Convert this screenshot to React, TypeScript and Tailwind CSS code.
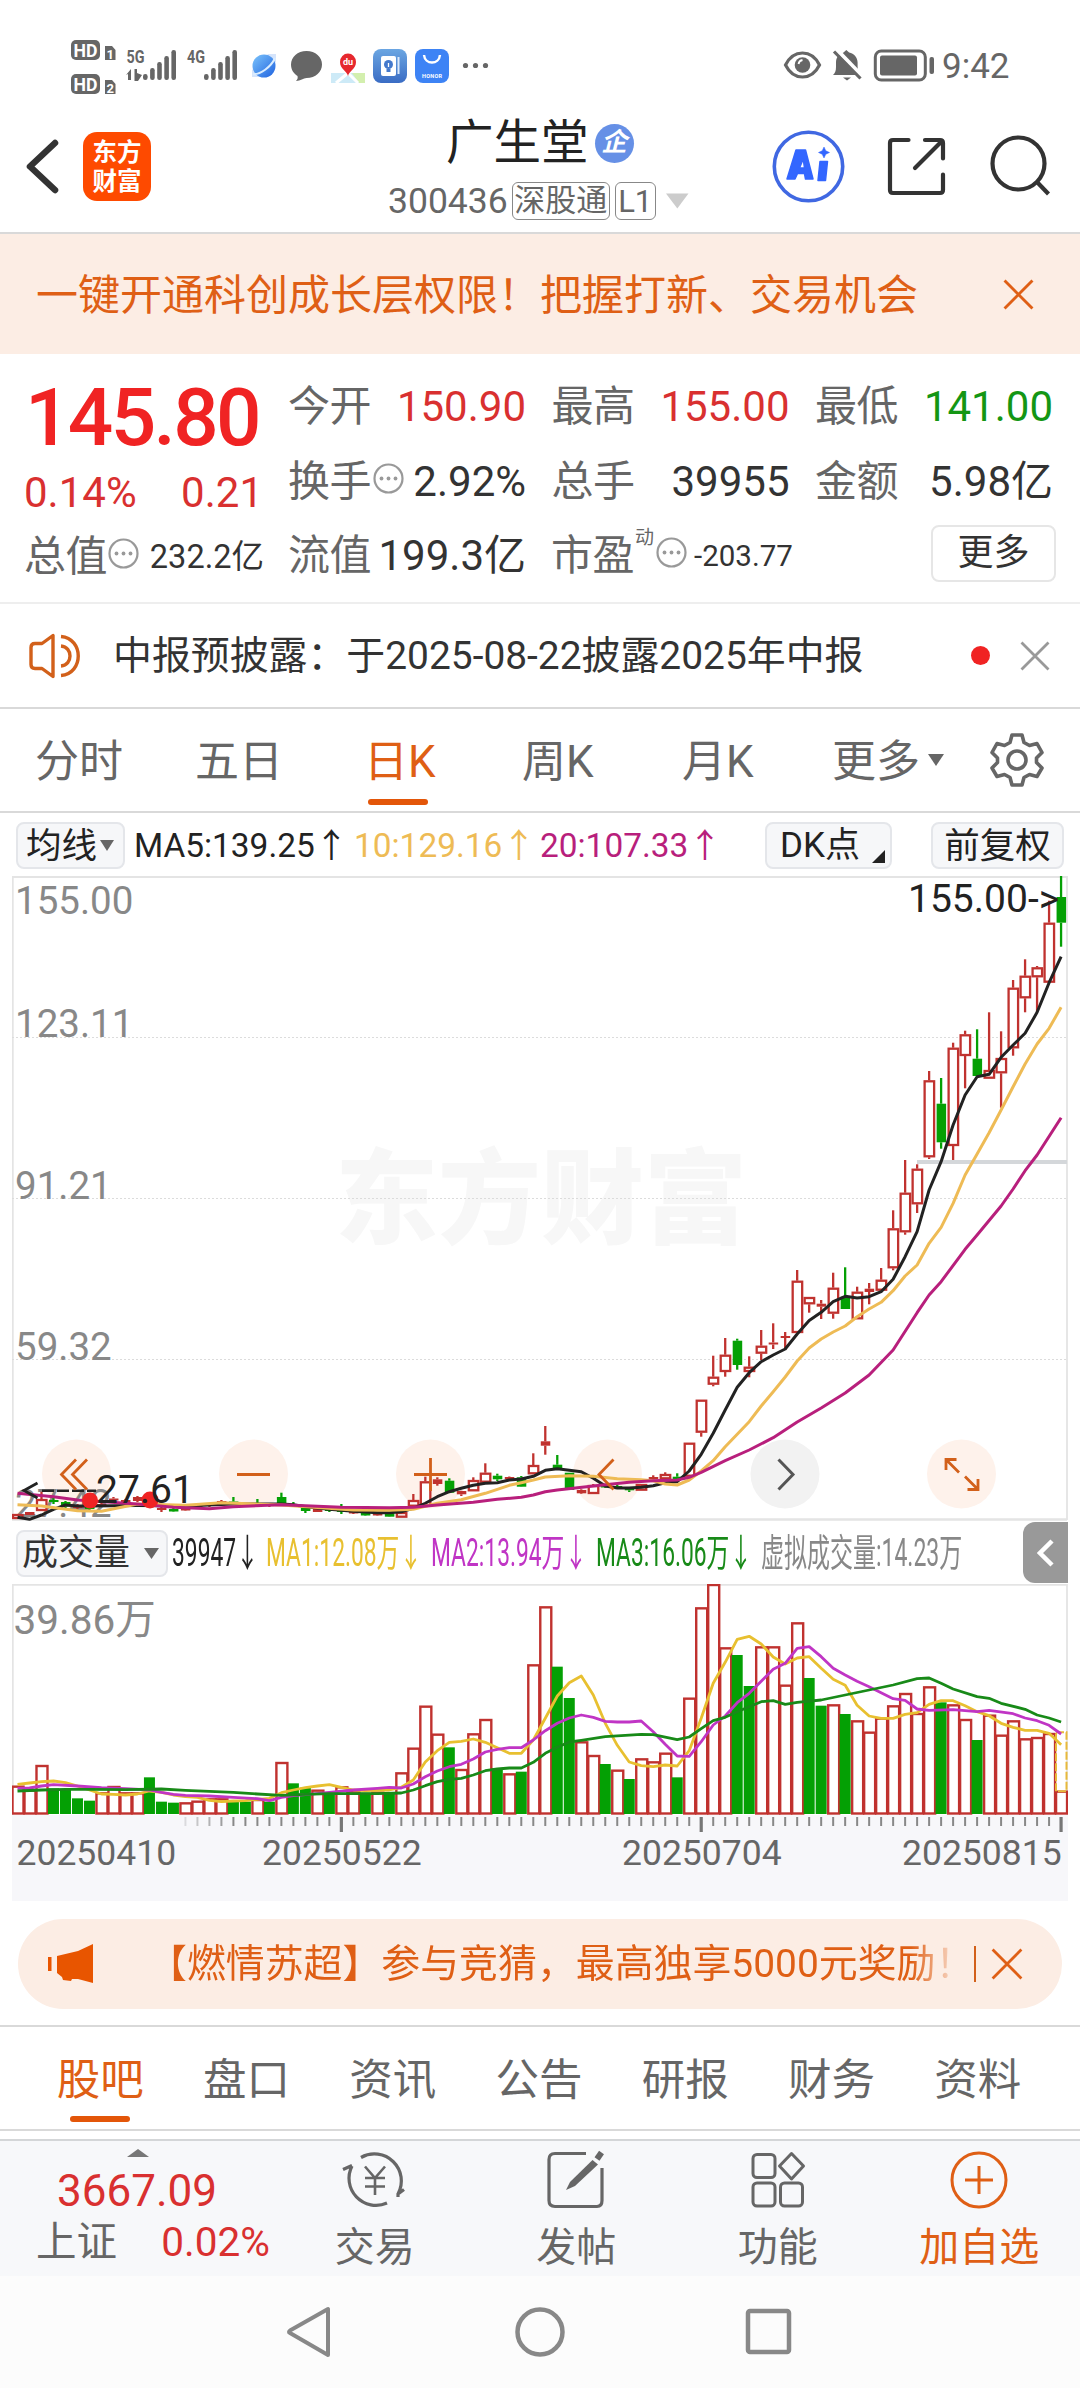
import React from "react";

const PITCH = 11.995;
const cx = (i: number) => 5.5 + i * PITCH;

type Candle = [number, "r" | "g", number, number, number, number];

/* index, colour, high, body top, body bottom, low */
const candles: Candle[] = [
  [0, "r", 638, 638, 643, 643], [1, "r", 636, 636, 639, 639], [2, "r", 615.7, 623, 635, 635],
  [3, "g", 622, 624, 626, 628], [4, "g", 625, 626, 630.5, 632], [5, "r", 628, 630, 632, 633], [6, "g", 630, 631, 633, 634],
  [7, "r", 627, 628, 630, 631], [8, "r", 621, 622.5, 624.5, 626], [9, "r", 623, 624, 626, 627], [10, "r", 620, 621, 625, 626],
  [11, "r", 622, 623, 629, 630], [12, "r", 630, 632, 634, 636], [13, "g", 631, 633, 635.5, 636], [14, "r", 630, 631, 634.5, 635],
  [15, "r", 629, 630, 632, 633], [16, "r", 627, 628, 630, 631], [17, "r", 624, 625, 627, 628], [18, "g", 621, 625.5, 627, 628],
  [19, "g", 627, 628, 629, 630], [20, "g", 623, 627, 629, 630], [21, "r", 627, 628, 630, 631], [22, "g", 616.7, 621, 627, 628],
  [23, "g", 626, 628, 631, 631], [24, "g", 631, 632, 635, 637], [25, "r", 631, 633, 636, 636], [26, "g", 631, 633, 635, 636],
  [27, "g", 628, 633, 636, 638], [28, "r", 635, 636, 637, 638], [29, "g", 636, 637, 639.5, 640], [30, "r", 636, 637, 639.5, 640],
  [31, "g", 637, 637.3, 640.7, 641], [32, "r", 636, 636, 641.7, 641.7], [33, "r", 618, 624, 630.7, 630.7],
  [34, "r", 600.7, 605.3, 630, 630], [35, "r", 601.3, 603.3, 608, 609.7], [36, "g", 602.3, 604.7, 616.7, 616.7],
  [37, "r", 614.7, 615, 618.3, 620], [38, "r", 601.3, 604, 615.3, 615.3], [39, "r", 587.3, 596.7, 606.7, 606.7],
  [40, "g", 597.7, 599.7, 603.3, 605], [41, "r", 600.5, 601, 603.3, 603.3], [42, "g", 600, 601.3, 610.7, 611],
  [43, "r", 577.3, 589, 598.3, 598.3], [44, "r", 550, 565.3, 569.7, 578.7], [45, "g", 579, 588.7, 592.3, 592.3],
  [46, "g", 596.7, 596.7, 614, 614], [47, "r", 613.3, 614, 617.3, 618], [48, "r", 608, 609, 618, 618], [49, "g", 609, 610, 611.3, 612],
  [50, "g", 609, 610, 611.3, 613], [51, "g", 611, 612.3, 614.3, 616], [52, "r", 608, 608, 614.7, 614.7], [53, "r", 599.3, 601, 603.3, 604],
  [54, "r", 596.3, 598, 603.3, 603.3], [55, "g", 597.3, 600.7, 604, 604], [56, "r", 566.7, 566.7, 600.7, 600.7],
  [57, "r", 523.7, 523.7, 556.7, 560.7], [58, "r", 479.7, 500.7, 508.7, 510.3], [59, "r", 462, 478.7, 496, 500.7],
  [60, "g", 462.7, 464.7, 489, 493.7], [61, "r", 480.3, 490.7, 496, 501.3], [62, "r", 454, 469.7, 477.7, 484],
  [63, "r", 447.3, 466.5, 468.5, 473], [64, "r", 456, 460, 462, 474], [65, "r", 394, 404.7, 457, 457], [66, "r", 421, 421, 428.3, 436.7],
  [67, "r", 424, 427.7, 430.7, 443], [68, "r", 396.7, 411.7, 437.7, 442.7], [69, "g", 391.3, 420.7, 433, 433],
  [70, "r", 410.7, 415.7, 443.3, 443.3], [71, "r", 407, 412.7, 416, 428.3], [72, "r", 392, 403.7, 414.7, 414.7],
  [73, "r", 334.3, 352.3, 392.3, 394.3], [74, "r", 284, 316.7, 356.3, 358.7], [75, "r", 288.3, 292.7, 328.3, 337],
  [76, "r", 195, 204.3, 281.3, 283], [77, "g", 202, 227.7, 266.3, 272.7], [78, "r", 166.7, 171.7, 270, 284],
  [79, "r", 154.7, 158.3, 180, 212.3], [80, "g", 153.3, 182.7, 200, 200], [81, "r", 136.3, 194, 202.7, 202.7],
  [82, "r", 155.3, 182, 197.3, 231.7], [83, "r", 104, 111.7, 172.3, 179.7], [84, "r", 83.3, 99.7, 122.3, 136.3],
  [85, "r", 90, 91.3, 101.3, 135.7], [86, "r", 24.7, 46.7, 106.7, 106.7], [87, "g", 0, 21, 46.7, 70.7],
];

type Pt = [number, number];

const ma5: Pt[] = [
  [0, 641.3], [1, 643.3], [2, 639], [3, 633.3], [4, 629], [5, 630], [6, 630], [10, 629.5], [14, 630], [18, 628], [22, 628], [23, 628.7], [24, 630.7],
  [26, 633.3], [28, 635.3], [30, 636.7], [31, 636.7], [32, 635.7], [33, 632.3], [34, 627.3], [35, 620.7], [36, 615.7], [37, 612.3],
  [38, 609.3], [39, 607.3], [40, 606.7], [41, 604], [42, 603], [43, 600.3], [44, 594.3], [45, 592.7], [46, 594.3], [47, 595.7],
  [48, 602.3], [49, 610], [50, 612], [51, 612], [52, 611.3], [53, 609.7], [54, 606.7], [55, 605.7], [56, 595], [57, 578.3],
  [58, 557.3], [59, 534], [60, 511.3], [61, 496.7], [62, 485.7], [63, 479], [64, 473], [65, 458], [66, 444.5], [67, 436.3],
  [68, 425.7], [69, 420.3], [70, 422], [71, 420.7], [72, 415.7], [73, 403.3], [74, 380.7], [75, 355.7], [76, 314], [77, 285.7],
  [78, 249], [79, 219], [80, 200.7], [81, 198.3], [82, 181.3], [83, 169], [84, 157.3], [85, 136.3], [86, 106.7], [87, 80.7],
];
const ma10: Pt[] = [
  [0, 628.7], [2, 630], [5, 634.7], [7, 635.3], [10, 628], [14, 629.3], [17, 626.7], [22, 629], [28, 634], [31, 634.3], [33, 633.3],
  [35, 627.3], [37, 623.7], [39, 617.3], [41, 609.3], [42, 606.7], [43, 604], [44, 601], [46, 599.7], [48, 600.3], [50, 602.7],
  [52, 603.7], [53, 604.7], [54, 608], [55, 609], [56, 604], [57, 595], [58, 584.7], [59, 570.7], [60, 558.3], [61, 545.7],
  [62, 530], [63, 515.7], [64, 501], [65, 485], [66, 472], [67, 463], [68, 456], [69, 450], [70, 440.7], [71, 433], [72, 426.3],
  [73, 414.7], [74, 400], [75, 389], [76, 367.3], [77, 351.3], [78, 327.3], [79, 299], [80, 278], [81, 256.7], [82, 234],
  [83, 210.7], [84, 188], [85, 168], [86, 152.3], [87, 131.3],
];
const ma20: Pt[] = [
  [0, 617.3], [3, 620.7], [5, 624], [10, 628], [13, 631.3], [16, 632.7], [18, 630.7], [22, 628.7], [27, 631.3], [31, 631.7],
  [33, 631.3], [35, 629], [38, 626.3], [40, 623.3], [42, 621.3], [43, 619], [44, 615.7], [45, 614], [48, 610], [51, 606.3],
  [53, 604.7], [55, 604], [56, 601.3], [57, 596.3], [59, 584.7], [61, 574], [63, 561.7], [65, 546], [67, 532], [69, 517],
  [71, 499], [73, 474], [75, 436.7], [76, 419], [77, 405.7], [79, 373.3], [80, 359], [82, 330], [83, 313], [84, 294.7], [85, 279], [87, 241.7],
];

/* bar tops and averages of the volume pane, in thirds of a pixel */
const vy = (v: number) => v / 3 - 24;
const volumes: number[] = [
  680, 692, 618, 685, 687, 715, 722, 700, 681, 700, 700, 652, 725, 728, 730, 725, 718, 718, 725, 725, 720, 725, 609, 670, 683, 692,
  700, 682, 695, 698, 698, 700, 640, 566, 440, 524, 562, 630, 523, 480, 625, 643, 635, 316, 142, 320, 414, 547, 588, 612, 632, 657,
  598, 607, 581, 652, 416, 145, 75, 265, 285, 378, 262, 262, 377, 190, 354, 437, 436, 462, 484, 518, 476, 439, 402, 462, 382, 427,
  436, 480, 540, 467, 527, 484, 538, 534, 522, 695,
];
const greenBars = [3, 4, 5, 6, 11, 12, 13, 18, 19, 21, 23, 24, 26, 29, 31, 36, 40, 42, 45, 46, 49, 51, 55, 60, 61, 66, 67, 69, 77, 80];

const va1: Pt[] = [
  [0, 673], [1, 669], [2, 665], [3, 663], [4, 668], [5, 678], [6, 690], [7, 702], [8, 703], [9, 705], [10, 702], [11, 693], [12, 697],
  [13, 705], [14, 710], [15, 712], [16, 721], [17, 725], [18, 723], [19, 722], [20, 718], [21, 715], [22, 698], [23, 690], [24, 683],
  [25, 678], [26, 674], [27, 682], [28, 690], [29, 692], [30, 691], [31, 690], [32, 682], [33, 660], [34, 606], [35, 572], [36, 547],
  [37, 544], [38, 537], [39, 547], [40, 563], [41, 580], [42, 580], [43, 540], [44, 475], [45, 408], [46, 368], [47, 348], [48, 405],
  [49, 490], [50, 556], [51, 606], [52, 617], [53, 620], [54, 615], [55, 618], [56, 572], [57, 475], [58, 370], [59, 307], [60, 238],
  [61, 229], [62, 252], [63, 291], [64, 312], [65, 294], [66, 290], [67, 325], [68, 358], [69, 376], [70, 436], [71, 468], [72, 475],
  [73, 475], [74, 463], [75, 458], [76, 433], [77, 422], [78, 422], [79, 437], [80, 455], [81, 467], [82, 490], [83, 502], [84, 511],
  [85, 511], [86, 520], [87, 554],
];
const va2: Pt[] = [
  [0, 685], [1, 684], [2, 678], [3, 674], [5, 678], [7, 683], [9, 686], [11, 690], [12, 697], [13, 703], [14, 706], [16, 708], [18, 712],
  [20, 716], [21, 722], [22, 712], [23, 707], [24, 704], [26, 697], [28, 690], [30, 685], [31, 682], [32, 684], [33, 672], [34, 650],
  [35, 633], [36, 620], [37, 613], [38, 597], [39, 576], [40, 568], [41, 563], [42, 563], [43, 540], [44, 512], [45, 490], [46, 474],
  [47, 465], [48, 472], [49, 484], [50, 486], [51, 486], [52, 483], [53, 515], [54, 553], [55, 588], [56, 589], [57, 545], [58, 495],
  [59, 468], [60, 428], [61, 400], [62, 364], [63, 328], [64, 310], [65, 265], [66, 260], [67, 290], [68, 325], [69, 345], [70, 364],
  [71, 380], [72, 398], [73, 416], [74, 421], [75, 447], [76, 451], [78, 449], [80, 455], [81, 451], [83, 461], [84, 474], [85, 482],
  [86, 496], [87, 522],
];
const va3: Pt[] = [
  [0, 693], [2, 690], [4, 688], [6, 688], [9, 689], [12, 687], [14, 691], [16, 694], [18, 697], [20, 702], [22, 706], [24, 703], [26, 701],
  [30, 701], [32, 699], [33, 690], [34, 677], [35, 665], [36, 658], [37, 655], [38, 645], [39, 632], [40, 627], [41, 624], [42, 624],
  [43, 607], [44, 580], [45, 562], [46, 546], [47, 541], [49, 530], [52, 523], [53, 524], [55, 539], [56, 531], [57, 506], [58, 482],
  [59, 472], [60, 455], [61, 440], [62, 425], [63, 422], [64, 433], [65, 427], [67, 420], [69, 405], [71, 390], [73, 375], [75, 356],
  [76, 354], [77, 370], [78, 387], [80, 410], [81, 415], [82, 430], [84, 448], [85, 465], [86, 474], [87, 486],
];

const line = (pts: Pt[], f: (v: number) => number = (v) => v) => pts.map(([i, v]) => `${cx(i).toFixed(1)},${f(v).toFixed(1)}`).join(" ");

const RED = "#c0322f";
const GREEN = "#04a004";

function StatusBar() {
  return (
    <div className="flex h-[112px] items-start pt-[38px] text-[#666]">
      <svg className="ml-[70px]" width="170" height="60" viewBox="70 38 170 60" fill="#666">
        {[40, 74].map((y, k) => (
          <g key={y}>
            <rect x="71" y={y} width="29" height="20" rx="5" />
            <text x="85.5" y={y + 16.500} fontSize="18" fontWeight="700" fill="#fff" textAnchor="middle" textLength="24" lengthAdjust="spacingAndGlyphs" fontFamily="Roboto">HD</text>
            <path d={`M105 ${y + 6}h7l3.500 4v10h-10.500z`} />
            <text x="110.200" y={y + 19} fontSize="13" fontWeight="700" fill="#fff" textAnchor="middle" fontFamily="Roboto">{k + 1}</text>
          </g>
        ))}
        <text x="126.500" y="63" fontSize="19" fontWeight="700" textLength="18" lengthAdjust="spacingAndGlyphs" fontFamily="Roboto">5G</text>
        <text x="187" y="63" fontSize="19" fontWeight="700" textLength="18" lengthAdjust="spacingAndGlyphs" fontFamily="Roboto">4G</text>
        <path d="M126 75l5-6v11h-3v-6zM134.500 69h2.500v4l5 2-4 6h-3.500z" />
        {[143, 204].map((x) =>
          [6, 12, 18, 24, 30].map((h, k) => <rect key={x + "-" + k} x={x + k * 7.100} y={80 - h} width="4.600" height={h} rx="2.200" />)
        )}
      </svg>
      <svg className="ml-[11px]" width="240" height="60" viewBox="251 38 240 60">
        <defs>
          <linearGradient id="planet" x1="0" y1="0" x2="1" y2="1"><stop offset="0" stopColor="#7cc4fb" /><stop offset="1" stopColor="#1f62e0" /></linearGradient>
          <linearGradient id="tip" x1="0" y1="0" x2="0" y2="1"><stop offset="0" stopColor="#6ba6e2" /><stop offset="1" stopColor="#3a6cc4" /></linearGradient>
        </defs>
        <path d="M268 54h8v8l-16 15h-8v-7z" fill="#d5e4fb" />
        <circle cx="264" cy="66" r="11.500" fill="url(#planet)" />
        <path d="M253 74c7 1 18-7 22-16" stroke="#d9ecff" strokeWidth="2" fill="none" />
        <path d="M306.500 51c9 0 15.500 6 15.500 13.500S315.500 78 306.500 78c-3 0-6 3-10.500 3 1.500-1.500 2-3 1.500-5-4-2.500-6.500-6.500-6.500-11.500C291 57 297.500 51 306.500 51z" fill="#666" />
        <path d="M331 73h34v10h-34z" fill="#cdeaf7" />
        <path d="M352 73h13v10h-6z" fill="#d3efae" />
        <path d="M348 73l-12 10M348 73l10 10" stroke="#fff" strokeWidth="3" />
        <path d="M348 76c-1-5-8-7-8-14a8 8.500 0 0 1 16 0c0 7-7 9-8 14z" fill="#e6282e" />
        <text x="348" y="65" fontSize="9" fontWeight="700" fill="#fff" textAnchor="middle" fontFamily="Roboto">du</text>
        <rect x="373" y="49" width="34" height="34" rx="8" fill="url(#tip)" />
        <rect x="381" y="56" width="15" height="20" rx="2" fill="#fff" />
        <path d="M398.500 57v17" stroke="#dbe9fb" strokeWidth="2" />
        <circle cx="388.500" cy="64.500" r="4.500" fill="#4479cc" />
        <path d="M386.500 69h4v3h-4z" fill="#4479cc" />
        <path d="M388.500 63v4" stroke="#fff" strokeWidth="1.300" />
        <rect x="415" y="49" width="34" height="34" rx="8" fill="#3d83f5" />
        <path d="M424 55c1 10 15 10 16 0" stroke="#fff" strokeWidth="2.500" fill="none" />
        <text x="432" y="77.500" fontSize="5.500" fontWeight="700" fill="#fff" textAnchor="middle" textLength="20" fontFamily="Roboto">HONOR</text>
        <g fill="#666"><circle cx="465.500" cy="65.500" r="2.600" /><circle cx="475.500" cy="65.500" r="2.600" /><circle cx="485.500" cy="65.500" r="2.600" /></g>
      </svg>
      <svg className="ml-[291px]" width="156" height="60" viewBox="782 38 156 60" fill="none" stroke="#666">
        <path d="M785.500 65c8-16 26-16 34 0c-8 16-26 16-34 0z" strokeWidth="3.200" />
        <circle cx="802.500" cy="65" r="7.800" fill="#666" stroke="none" />
        <path d="M798.500 64a5 5 0 0 1 4-4" stroke="#fff" strokeWidth="1.800" />
        <path d="M833 75c2-2 3-4 3-8v-5c0-3 1-5 3-7l4.500-2.500 2.800-2.500 2.800 2.500c5 1 8.500 5 8.500 10v4c0 4 1 6 2.500 8.500z" fill="#666" stroke="none" />
        <path d="M843 77.500h8l-4 3z" fill="#666" stroke="none" />
        <path d="M836.500 49.500l27 28" stroke="#fff" strokeWidth="4" />
        <path d="M834 51.500l26.500 27" strokeWidth="3.200" />
        <rect x="875.300" y="51" width="50" height="29" rx="6" strokeWidth="3" />
        <rect x="880" y="55.500" width="37" height="20" rx="2" fill="#666" stroke="none" />
        <rect x="929.500" y="57" width="4.500" height="17" rx="2" fill="#666" stroke="none" />
      </svg>
      <span className="ml-[4px] mt-[9px] text-[35px] leading-[40px]">9:42</span>
    </div>
  );
}

function Header() {
  return (
    <header className="flex h-[122px] items-start border-b-2 border-[#d9d9d9]">
      <svg className="ml-[24px] mt-[24px]" width="38" height="62" viewBox="0 0 38 62" fill="none" stroke="#333" strokeWidth="6.500" strokeLinecap="round" strokeLinejoin="round">
        <path d="M31 7L6 30.500L31 54" />
      </svg>
      <div className="ml-[21px] mt-[20px] flex h-[69px] w-[68px] flex-col items-center justify-center rounded-[14px] bg-[#fe4a00] text-[24.500px] leading-[29px] font-bold text-white">
        <span>东方</span>
        <span>财富</span>
      </div>
      <div className="ml-[237px] w-[302px]">
        <div className="flex h-[62px] items-center pl-[58px]">
          <span className="text-[47.500px] leading-[64px] text-[#222]">广生堂</span>
          <span className="ml-[6px] flex h-[39px] w-[39px] items-center justify-center rounded-full bg-[#6690e6] text-[26px] leading-none font-bold text-white"><i className="pb-[3px]">企</i></span>
        </div>
        <div className="mt-[7px] flex h-[40px] items-center text-[#666]">
          <span className="text-[35.500px] leading-[40px]">300436</span>
          <span className="ml-[4px] flex h-[38px] w-[98px] items-center justify-center rounded-[6px] border-[1.500px] border-[#888] text-[31px] leading-none"><span className="pb-[1px]">深股通</span></span>
          <span className="ml-[5px] flex h-[38px] w-[41px] items-center justify-center rounded-[6px] border-[1.500px] border-[#888] text-[31px] leading-none">L1</span>
          <svg className="ml-[10px]" width="23" height="16"><path d="M0 0.500h22.500l-11.200 15z" fill="#ccc" /></svg>
        </div>
      </div>
      <svg className="ml-[80px] mt-[16px]" width="76" height="78" viewBox="770 128 76 78">
        <circle cx="808.500" cy="166.500" r="34.200" fill="none" stroke="#4068e2" strokeWidth="3.600" />
        <g fill="#3366ff" stroke="#3366ff" strokeWidth="1.500" strokeLinejoin="round">
          <path fillRule="evenodd" d="M796 150h9.500l7.500 29h-7.500l-1-5.500h-7l-2.500 5.500h-8zM799.500 168h5l-1.300-9z" />
          <path d="M820 161.500h7.500l-2 19h-7.500z" />
          <path d="M824 147l1.800 3.800 3.700 1.700-3.700 1.700-1.800 3.800-1.800-3.800-3.700-1.700 3.700-1.700z" strokeWidth=".5" />
        </g>
      </svg>
      <svg className="ml-[38px] mt-[20px]" width="68" height="70" viewBox="884 132 68 70" fill="none" stroke="#333" strokeWidth="4.200" strokeLinecap="round">
        <path d="M908.500 140H893q-3 0-3 3v47q0 3 3 3h47q3 0 3-3v-15.500M925 140h15q3 0 3 3v15.500M942 141l-27 27" />
      </svg>
      <svg className="ml-[36px] mt-[20px]" width="66" height="70" viewBox="988 132 66 70" fill="none" stroke="#333" strokeWidth="4.200">
        <circle cx="1018.500" cy="163.500" r="26" />
        <path d="M1037 182l11.500 12" />
      </svg>
    </header>
  );
}

function Close({ size, stroke, color, className }: { size: number; stroke: number; color: string; className?: string }) {
  return (
    <svg className={className} width={size} height={size} viewBox="0 0 30 30" stroke={color} strokeWidth={stroke}>
      <path d="M1.500 1.500l27 27M28.500 1.500l-27 27" />
    </svg>
  );
}

function Dots() {
  return (
    <svg width="31" height="31" viewBox="0 0 31 31" fill="#999">
      <circle cx="15.500" cy="15.500" r="14" fill="none" stroke="#999" strokeWidth="2.200" />
      <circle cx="8.500" cy="15.500" r="1.900" /><circle cx="15.500" cy="15.500" r="1.900" /><circle cx="22.500" cy="15.500" r="1.900" />
    </svg>
  );
}

function Cell({ label, value, color = "text-[#333]", dots = false, className = "w-[238px]" }: { label: string; value: string; color?: string; dots?: boolean; className?: string }) {
  return (
    <div className={"flex items-center whitespace-nowrap " + className}>
      <span className="text-[42px] tracking-[-0.5px] text-[#666]">{label}</span>
      {dots && <span className="mb-[7px] ml-[2px] -mr-[22px]"><Dots /></span>}
      <span className={"ml-auto text-[42px] " + color}>{value}</span>
    </div>
  );
}

function Quote() {
  return (
    <section className="flex h-[250px] border-b-2 border-[#eee] pt-[18px] leading-[70px]">
      <div className="w-[264px] pl-[25px]">
        <div className="h-[88px] text-[80px] leading-[92px] font-medium tracking-[-2.600px] text-[#f02323]">145.80</div>
        <div className="-ml-px flex h-[66px] items-center justify-between pr-[1px] text-[42px] text-[#d93030]">
          <span>0.14%</span>
          <span>0.21</span>
        </div>
        <div className="-ml-px flex h-[61px] items-center whitespace-nowrap">
          <span className="text-[42px] tracking-[-0.500px] text-[#666]">总值</span>
          <span className="mb-[7px] ml-[1px]"><Dots /></span>
          <span className="ml-auto text-[32.500px] text-[#333]">232.2亿</span>
        </div>
      </div>
      <div className="ml-[24px] w-[768px]">
        <div className="flex h-[70px] items-center gap-[25.500px]">
          <Cell label="今开" value="150.90" color="text-[#d93030]" />
          <Cell label="最高" value="155.00" color="text-[#d93030]" />
          <Cell label="最低" value="141.00" color="text-[#149614]" />
        </div>
        <div className="mt-[5px] flex h-[70px] items-center gap-[25.500px]">
          <Cell label="换手" value="2.92%" dots />
          <Cell label="总手" value="39955" />
          <Cell label="金额" value="5.98亿" />
        </div>
        <div className="mt-[4px] flex h-[70px] items-center">
          <Cell label="流值" value="199.3亿" />
          <span className="ml-[25px] text-[42px] tracking-[-0.500px] text-[#666]">市盈</span>
          <span className="mb-[36px] ml-[1px] text-[19px] leading-[20px] text-[#666]">动</span>
          <span className="mb-[7px] ml-[2px]"><Dots /></span>
          <span className="ml-[7px] text-[29.500px] text-[#333]">-203.77</span>
          <button className="mb-[5px] ml-auto flex h-[57px] w-[125px] items-center justify-center rounded-[8px] border-2 border-[#e6e6e6] pb-[2px] text-[36px] leading-none text-[#333]">更多</button>
        </div>
      </div>
    </section>
  );
}

function Notice() {
  return (
    <section className="flex h-[105px] items-center border-b-2 border-[#d9d9d9] pl-[29px]">
      <svg width="52" height="46" viewBox="0 0 52 46" fill="none" stroke="#d2601a" strokeWidth="3.400" strokeLinecap="round" strokeLinejoin="round">
        <path d="M24 2.500v41L13 35.500H6q-4 0-4-4v-17q0-4 4-4h7z" />
        <path d="M32 3.500c23 2 23 37 0 39M32 13c12 1 12 19 0 20" strokeLinecap="butt" />
      </svg>
      <span className="ml-[32px] text-[38.900px] leading-[50px] whitespace-nowrap text-[#333]">中报预披露：于2025-08-22披露2025年中报</span>
      <span className="ml-[108px] h-[19px] w-[19px] rounded-full bg-[#f02323]" />
      <Close className="ml-[30px]" size={30} stroke={2.800} color="#999" />
    </section>
  );
}

function PeriodTabs() {
  return (
    <nav className="flex h-[104px] items-center border-b-2 border-[#d9d9d9] pt-[4px] pl-[35px] text-[44px] leading-[60px] whitespace-nowrap text-[#666]">
      <span className="w-[160px]">分时</span>
      <span className="w-[169px]">五日</span>
      <span className="relative w-[158px] text-[#df5f15]">
        日K
        <i className="absolute -bottom-[13px] left-[4px] h-[6px] w-[60px] rounded-full bg-[#e35609]" />
      </span>
      <span className="w-[160px]">周K</span>
      <span className="w-[150px]">月K</span>
      <span className="w-[96px]">更多</span>
      <svg className="mb-[4px]" width="16" height="14"><path d="M0 1h16l-8 12z" fill="#666" /></svg>
      <svg className="mb-[4px] ml-[46px]" width="54" height="56" viewBox="0 0 54 56" fill="none" stroke="#666" strokeWidth="3.600" strokeLinejoin="round">
        <path d="M22 3h10l2 7.500 5.500 3L47 11.500l5 9-5.500 5.500v4.500L52 36l-5 8.500-7.500-2-5.500 3L32 53H22l-2-7.500-5.500-3-7.500 2L2 36l5.500-5.500V26L2 20.500l5-9 7.500 2 5.500-3z" />
        <circle cx="27" cy="28" r="9" />
      </svg>
    </nav>
  );
}

function PriceHeader() {
  return (
    <div className="flex h-[61px] items-center pl-[16px] text-[33.400px] leading-[46px] whitespace-nowrap text-[#222]">
      <span className="flex h-[47px] w-[109px] items-center rounded-[8px] border-2 border-[#e4e6ea] bg-[#f6f7f9] pl-[8px] text-[35.500px]">
        均线
        <svg className="ml-[3px]" width="14" height="13"><path d="M0 1h14l-7 11z" fill="#666" /></svg>
      </span>
      <span className="ml-[9px] w-[220px]">MA5:139.25↑</span>
      <span className="w-[186px] text-[#eebb55]">10:129.16↑</span>
      <span className="w-[225px] text-[#b81f7c]">20:107.33↑</span>
      <span className="relative flex h-[47px] w-[127px] items-center rounded-[8px] border-2 border-[#e4e6ea] bg-[#f6f7f9] pl-[13px] text-[35px]">
        DK点
        <svg className="absolute right-[5px] bottom-[4px]" width="13" height="13"><path d="M13 0v13H0z" fill="#222" /></svg>
      </span>
      <span className="ml-[39px] flex h-[47px] w-[133px] items-center justify-center rounded-[8px] border-2 border-[#e4e6ea] bg-[#f6f7f9] text-[35.500px]">前复权</span>
    </div>
  );
}

function PriceChart() {
  return (
    <svg className="ml-[12px] block" width="1056" height="646" viewBox="0 0 1056 646" fontFamily="Roboto, 'Noto Sans CJK SC', sans-serif">
      <path d="M0 .8H1055M0 643.500H1055" stroke="#e4e4e4" strokeWidth="2.500" />
      <path d="M.8 0V644M1055 0V644" stroke="#e4e4e4" strokeWidth="1.800" />
      <text x="529" y="360" fontSize="103" fontWeight="900" fill="#f7f7f7" textAnchor="middle">东方财富</text>
      {[161.500, 322.500, 483.500].map((y) => (
        <path key={y} d={`M0 ${y}H1055`} stroke="#dcdcdc" strokeWidth="1.200" strokeDasharray="2 2" />
      ))}
      {[64.500, 241.500, 418.500, 595.500, 773, 949.500].map((x, k) => (
        <circle key={x} cx={x} cy="598" r="34.500" fill={k === 4 ? "#f2f2f2" : "#fef2eb"} />
      ))}
      <g fill="#888" fontSize="38.500">
        <text x="3" y="37.500">155.00</text>
        <text x="3" y="161">123.11</text>
        <text x="3" y="322.500">91.21</text>
        <text x="3" y="483.500">59.32</text>
        <text x="3" y="640.700">27.42</text>
      </g>
      <path d="M905 286H1055" stroke="#d4d7da" strokeWidth="4" />
      {candles.map(([i, c, hi, t, b, lo]) => {
        const x = cx(i);
        const small = b - t < 5;
        const col = c === "r" ? RED : GREEN;
        return (
          <g key={i} stroke={col} strokeWidth="2.300">
            {hi < t && <path d={`M${x} ${hi}V${t}`} />}
            {lo > b && <path d={`M${x} ${b}V${lo}`} />}
            {c === "g" || small ? (
              <rect x={x - 4.500} y={t} width="9.500" height={Math.max(b - t, 1.500)} fill={col} stroke="none" />
            ) : (
              <rect x={x - 4.500} y={t + 1} width="9.500" height={b - t - 2} fill="#fff" />
            )}
          </g>
        );
      })}
      <g fill="none" strokeWidth="3" strokeLinejoin="round">
        <polyline points={line(ma5)} stroke="#222" />
        <polyline points={line(ma10)} stroke="#eebb55" />
        <polyline points={line(ma20)} stroke="#b81f7c" />
      </g>
      <g fill="#f02323"><circle cx="78" cy="624.500" r="8" /><circle cx="138" cy="624" r="8.500" /></g>
      <g fill="#222" fontSize="39">
        <text x="896" y="36">155.00-&gt;</text>
        <path d="M25.500 607L12 614.500L25.500 622" fill="none" stroke="#222" strokeWidth="2.800" />
        <path d="M30 614.800H84" stroke="#222" strokeWidth="2.600" strokeDasharray="12 3" />
        <text x="84" y="627">27.61</text>
      </g>
      <g fill="none" stroke="#d2601a" strokeWidth="2.800">
        <path d="M64 583.500L49.500 598.500L64 613.500M75 583.500L60.500 598.500L75 613.500" />
        <path d="M225 598.500H258M402 598.500H435M418.500 582V615" />
        <path d="M601.500 583.500L587 598.500L601.500 613.500" />
        <path d="M934 594V583.500H944.500M934.500 584L947 596.500M966 603V613.500H955.500M965.500 613L953 600.500" />
      </g>
      <path d="M766.500 583.500L781 598.500L766.500 613.500" fill="none" stroke="#555" strokeWidth="3" />
    </svg>
  );
}

function VolumeHeader() {
  return (
    <div className="flex h-[62px] items-center pl-[16px] whitespace-nowrap">
      <span className="flex h-[47px] w-[152px] items-center rounded-[8px] border-2 border-[#e4e6ea] bg-[#f6f7f9] pl-[4px] text-[36px] leading-none text-[#333]">
        成交量
        <svg className="ml-[14px]" width="15" height="13"><path d="M0 1h15l-7.500 11z" fill="#666" /></svg>
      </span>
      <div className="ml-[4px] flex text-[38px] leading-[50px]">
        <span className="w-[94px] text-[#222]"><i className="inline-block origin-left scale-x-[0.6] not-italic">39947↓</i></span>
        <span className="w-[165px] text-[#e8c030]"><i className="inline-block origin-left scale-x-[0.6] not-italic">MA1:12.08万↓</i></span>
        <span className="w-[165px] text-[#c035c5]"><i className="inline-block origin-left scale-x-[0.6] not-italic">MA2:13.94万↓</i></span>
        <span className="w-[165px] text-[#188a18]"><i className="inline-block origin-left scale-x-[0.6] not-italic">MA3:16.06万↓</i></span>
        <span className="w-[262px] text-[#888]"><i className="inline-block origin-left scale-x-[0.605] not-italic">虚拟成交量:14.23万</i></span>
      </div>
      <span className="mb-[1px] flex h-[61px] w-[45px] items-center justify-center rounded-l-[12px] bg-[#999]">
        <svg width="18" height="28" viewBox="0 0 18 28" fill="none" stroke="#fff" strokeWidth="4.500"><path d="M15 2L3 14L15 26" /></svg>
      </span>
    </div>
  );
}

function VolumeChart() {
  const base = 230;
  return (
    <svg className="ml-[12px] block" width="1056" height="317" viewBox="0 0 1056 317" fontFamily="Roboto, 'Noto Sans CJK SC', sans-serif">
      <rect x="0" y="231" width="1056" height="86" fill="#f7f7fa" />
      <path d="M0 .8H1055" stroke="#e4e4e4" strokeWidth="2" />
      <path d="M.8 0V231M1055 0V231" stroke="#e4e4e4" strokeWidth="1.800" />
      <text x="1.500" y="50" fontSize="40.500" fill="#888">39.86万</text>
      {volumes.map((v, i) => {
        const top = vy(v);
        const x = cx(i);
        return greenBars.includes(i) ? (
          <rect key={i} x={x - 5.500} y={top} width="11" height={base - top} fill={GREEN} />
        ) : (
          <rect key={i} x={x - 5} y={top} width="11" height={base - top - 0.500} fill="#fff" stroke={RED} strokeWidth="2.400" />
        );
      })}
      <rect x="1044" y={vy(517)} width="10.500" height="59" fill="none" stroke="#e8b93a" strokeWidth="2" strokeDasharray="8 2" />
      <g fill="none" strokeWidth="2.800" strokeLinejoin="round">
        <polyline points={line(va1, vy)} stroke="#e8c030" />
        <polyline points={line(va2, vy)} stroke="#c035c5" />
        <polyline points={line(va3, vy)} stroke="#188a18" />
      </g>
      {Array.from({ length: 74 }, (_, k) => k + 14).map((i) => {
        const major = i % 30 === 27;
        return <path key={i} d={`M${cx(i)} 233V${major ? 248 : 242}`} stroke={major ? "#777" : "#888"} strokeWidth={major ? 3.200 : 2} opacity={i < 18 ? 0.25 + (i - 14) * 0.18 : 1} />;
      })}
      <g fontSize="35.500" fill="#666">
        <text x="4.500" y="281">20250410</text>
        <text x="250" y="281">20250522</text>
        <text x="610" y="281">20250704</text>
        <text x="890" y="281">20250815</text>
      </g>
    </svg>
  );
}

function Promo() {
  return (
    <section className="mx-[18px] mt-[18px] flex h-[90px] items-center rounded-full bg-[#fcede4] text-[#df5f15]">
      <svg className="ml-[30px]" width="46" height="40" viewBox="0 0 46 40" fill="#e85500">
        <path d="M0 13h3.500v14H0zM9 12l21-5 15-7v39l-15-4-6 0-1 2-8-1-1-3-5-4z" />
      </svg>
      <div className="ml-[54px] w-[812px] [mask-image:linear-gradient(to_right,#000_94%,transparent_100%)]">
        <span className="text-[38.900px] leading-[56px] whitespace-nowrap">【燃情苏超】参与竞猜，最高独享5000元奖励！</span>
      </div>
      <span className="ml-[14px] h-[36px] w-[2px] bg-[#d2601a]" />
      <Close className="ml-[15px]" size={32} stroke={2.600} color="#df5f15" />
    </section>
  );
}

function SectionTabs() {
  const tabs = ["股吧", "盘口", "资讯", "公告", "研报", "财务", "资料"];
  return (
    <nav className="mt-[16px] flex h-[106px] border-y-2 border-[#d9d9d9] pr-[29px] pl-[27px] text-[43.500px] text-[#666]">
      {tabs.map((t, i) => (
        <div key={t} className={"flex flex-1 flex-col items-center " + (i === 0 ? "text-[#df5f15]" : "")}>
          <span className="mt-[24px] leading-[60px]">{t}</span>
          {i === 0 && <i className="mt-[5px] h-[6px] w-[60px] rounded-full bg-[#e35609]" />}
        </div>
      ))}
    </nav>
  );
}

function BottomBar() {
  const item = "flex w-[201.5px] flex-col items-center gap-[11px] pt-[9px] text-[40px] leading-[54px] text-[#666]";
  return (
    <footer className="mt-[8px] flex h-[137px] border-t-2 border-[#d4d6d8] bg-[#f7f8fa]">
      <div className="w-[274px] pt-[8px]">
        <svg className="ml-[127px] block" width="22" height="8"><path d="M0 8L11 0l11 8z" fill="#777" /></svg>
        <div className="ml-[57px] mt-[9px] text-[44px] leading-[50px] text-[#d93030]">3667.09</div>
        <div className="ml-[36px] mt-[1px] flex w-[234px] justify-between text-[40.500px] leading-[50px] text-[#666]">
          <span>上证</span>
          <span className="text-[#d93030]">0.02%</span>
        </div>
      </div>
      <div className={item}>
        <svg width="66" height="60" viewBox="0 0 66 60" fill="none" stroke="#666" strokeWidth="3.200">
          <path d="M19 7.500A27 27 0 0 1 56 44M45 53A27 27 0 0 1 10 16M1 19.500L10 15.500M62 39.500L56 44V47" />
          <path d="M23 16.500L33 28L43 16.500M33 28V45M23 28H43M23 36.500H43" strokeWidth="2.600" />
        </svg>
        <span>交易</span>
      </div>
      <div className={item}>
        <svg width="66" height="60" viewBox="0 0 66 60" fill="none" stroke="#666" strokeWidth="3.200">
          <path d="M43 3.500H12q-6 0-6 6v41q0 6 6 6h42q5 0 5-6V18" />
          <path d="M54 9l4.500-6.500" strokeWidth="6" />
          <path d="M49.500 10l5.500 4.500L32 36l-9 4 4-8z" fill="#666" stroke="none" />
        </svg>
        <span>发帖</span>
      </div>
      <div className={item}>
        <svg width="60" height="60" viewBox="0 0 60 60" fill="none" stroke="#666" strokeWidth="3">
          <rect x="5" y="4.500" width="22" height="23" rx="4" />
          <rect x="5" y="33" width="22" height="23" rx="4" />
          <rect x="32.500" y="33" width="22" height="23" rx="4" />
          <path d="M43.500 3.500L55.500 16L43.500 29L31.500 16z" strokeLinejoin="round" />
        </svg>
        <span>功能</span>
      </div>
      <div className={item + " text-[#df5f15]!"}>
        <svg width="60" height="60" viewBox="0 0 60 60" fill="none" stroke="#df5f15" strokeWidth="3">
          <circle cx="30" cy="30" r="27" />
          <path d="M16 30H44M30 16V44" />
        </svg>
        <span>加自选</span>
      </div>
    </footer>
  );
}

function SystemNav() {
  return (
    <div className="flex h-[112px] items-center bg-[#fcfcfc] pl-[285px]">
      <svg width="48" height="54" viewBox="0 0 48 54" fill="none" stroke="#888" strokeWidth="4" strokeLinejoin="round"><path d="M43 4V50L5 28Q3 27 5 25.500z" /></svg>
      <svg className="ml-[181px]" width="52" height="52" fill="none" stroke="#888" strokeWidth="4.500"><circle cx="26" cy="26" r="22.500" /></svg>
      <svg className="ml-[178px]" width="50" height="50" fill="none" stroke="#888" strokeWidth="4.500"><rect x="4" y="4" width="41" height="41" rx="2" /></svg>
    </div>
  );
}

export default function App() {
  return (
    <div className="h-[2388px] w-[1080px] overflow-hidden bg-white font-[Roboto,'Noto_Sans_CJK_SC',sans-serif]">
      <StatusBar />
      <Header />
      <section className="flex h-[120px] items-center bg-[#fcede4] pl-[36px] text-[#df5f15]">
        <span className="mt-[4px] text-[42px] leading-[60px] whitespace-nowrap">一键开通科创成长层权限！把握打新、交易机会</span>
        <Close className="ml-[85px]" size={31} stroke={2.800} color="#df5f15" />
      </section>
      <Quote />
      <Notice />
      <PeriodTabs />
      <div className="h-[2px]" />
      <PriceHeader />
      <PriceChart />
      <VolumeHeader />
      <VolumeChart />
      <Promo />
      <SectionTabs />
      <BottomBar />
      <SystemNav />
    </div>
  );
}
